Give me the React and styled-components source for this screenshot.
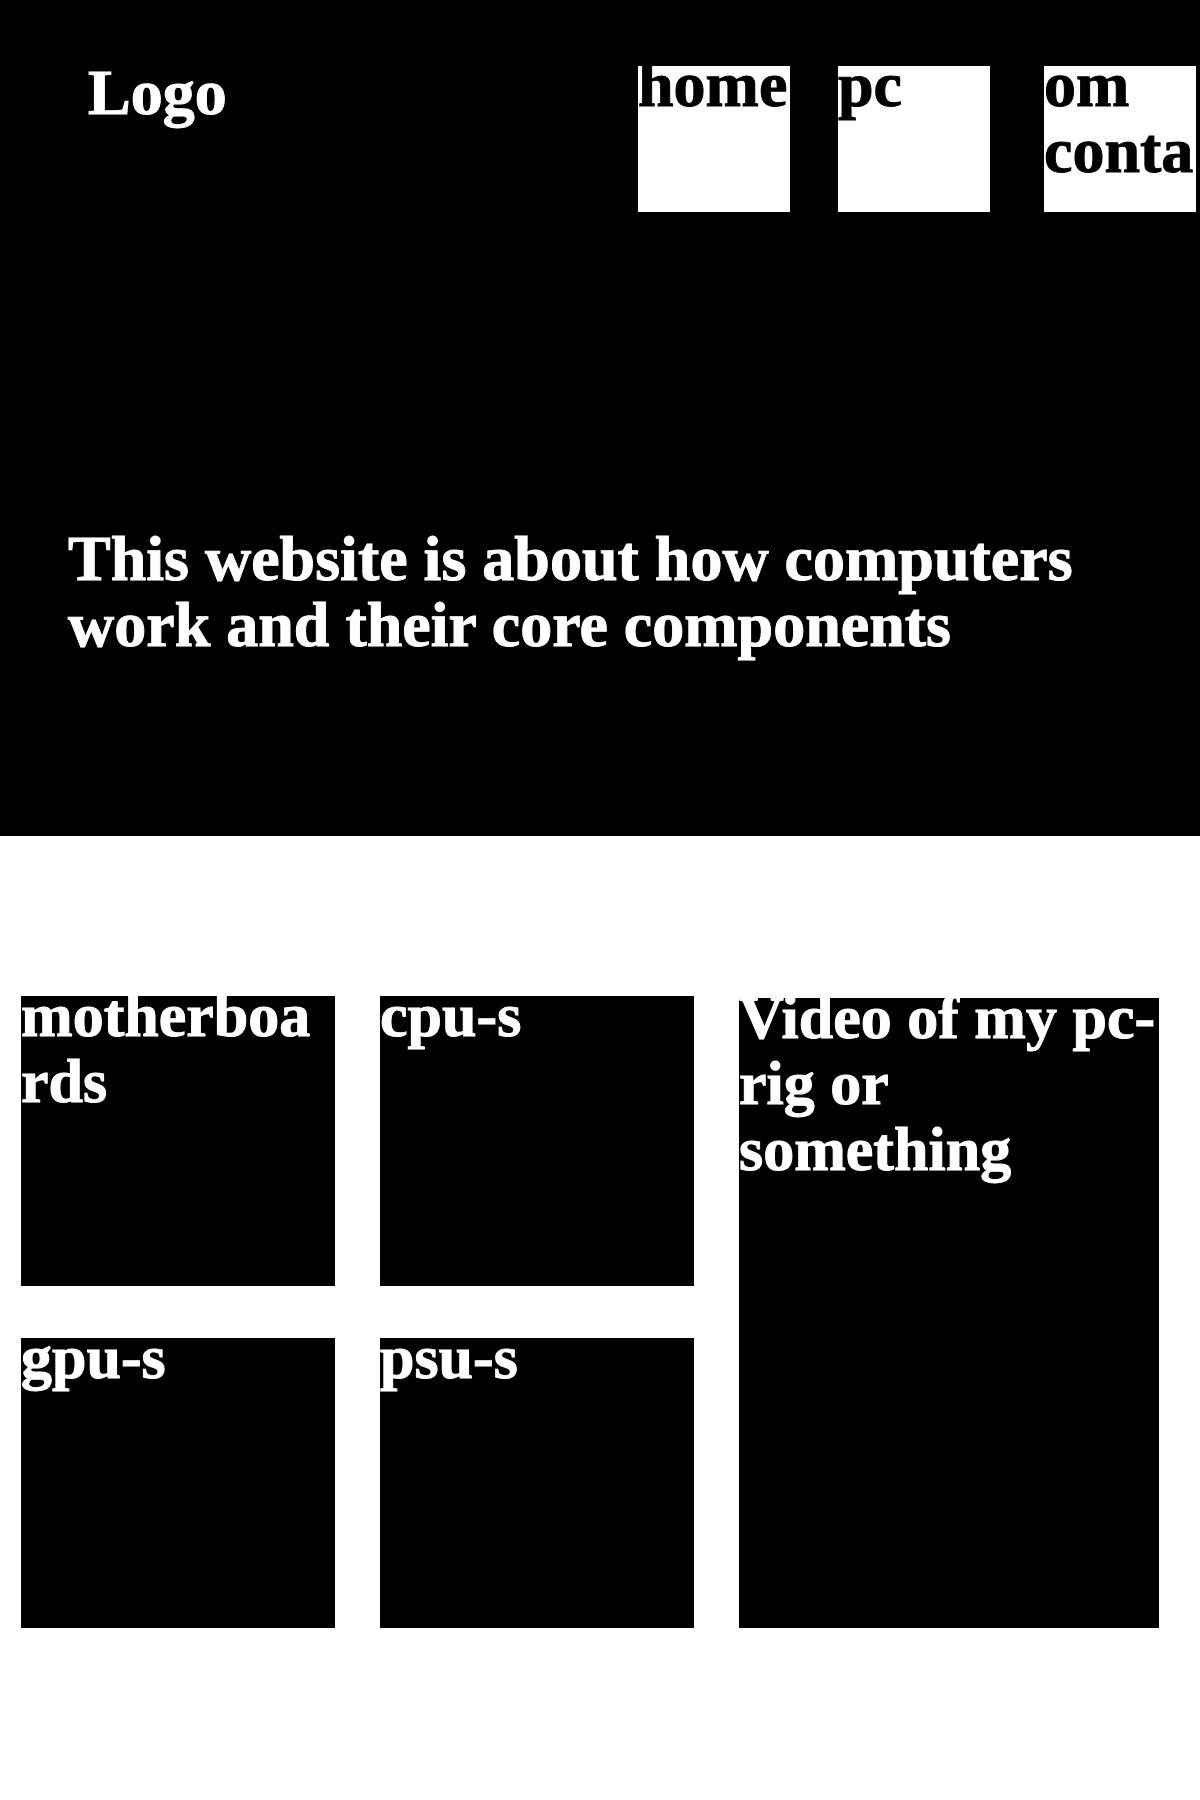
import React from "react";
import styled, { createGlobalStyle } from "styled-components";

const GlobalStyle = createGlobalStyle`
  *, *::before, *::after {
    box-sizing: border-box;
  }
  body {
    margin: 0;
    background: #fff;
    font-family: "Liberation Serif", serif;
    font-size: 64px;
    font-weight: 700;
    line-height: 66px;
    -webkit-text-stroke: 1px currentColor;
  }
`;

const Hero = styled.header`
  min-height: 836px;
  padding-top: 60px;
  background: #000;
  color: #fff;
`;

const TopBar = styled.div`
  display: flex;
  flex-wrap: wrap;
  justify-content: space-between;
  align-items: flex-start;
  padding: 0 4px 0 88px;
`;

const Logo = styled.a`
  color: inherit;
  text-decoration: none;
`;

const Nav = styled.nav`
  display: flex;
  flex-wrap: wrap;
  gap: 54px;
  padding-top: 6px;
`;

const NavGroup = styled.div`
  display: flex;
  gap: 48px;
`;

const NavTile = styled.a`
  width: 152px;
  height: 146px;
  background: #fff;
  color: #000;
  text-decoration: none;
`;

/* Pulls the first line up so its ascenders meet the tile's top edge. */
const Label = styled.span`
  display: block;
  margin-top: -14px;
`;

const Intro = styled.h1`
  margin: 314px 68px 0;
  font-size: inherit;
  font-weight: inherit;
`;

const Topics = styled.main`
  display: grid;
  grid-template-columns: 314fr 314fr 420fr;
  gap: 52px 45px;
  padding: 160px 41px 172px 21px;
`;

const Card = styled.h2`
  min-width: 0;
  min-height: ${({ $tall }) => ($tall ? 630 : 290)}px;
  margin: 0;
  grid-area: ${({ $area }) => $area};
  align-self: end;
  overflow-wrap: anywhere;
  background: #000;
  color: #fff;
  font-size: 62px;
  font-weight: inherit;
`;

const topics = [
  { title: "motherboards", area: "1 / 1" },
  { title: "cpu-s", area: "1 / 2" },
  { title: "gpu-s", area: "2 / 1" },
  { title: "psu-s", area: "2 / 2" },
  { title: "Video of my pc-rig or something", area: "1 / 3 / span 2", tall: true },
];

export default function App() {
  return (
    <>
      <GlobalStyle />
      <Hero>
        <TopBar>
          <Logo href="#">Logo</Logo>
          <Nav>
            <NavGroup>
              <NavTile href="#home">
                <Label>home</Label>
              </NavTile>
              <NavTile href="#pc">
                <Label>pc</Label>
              </NavTile>
            </NavGroup>
            <NavTile href="#contact">
              <Label>om conta</Label>
            </NavTile>
          </Nav>
        </TopBar>
        <Intro>This website is about how computers work and their core components</Intro>
      </Hero>
      <Topics>
        {topics.map(({ title, area, tall }) => (
          <Card key={title} $area={area} $tall={tall}>
            <Label>{title}</Label>
          </Card>
        ))}
      </Topics>
    </>
  );
}
